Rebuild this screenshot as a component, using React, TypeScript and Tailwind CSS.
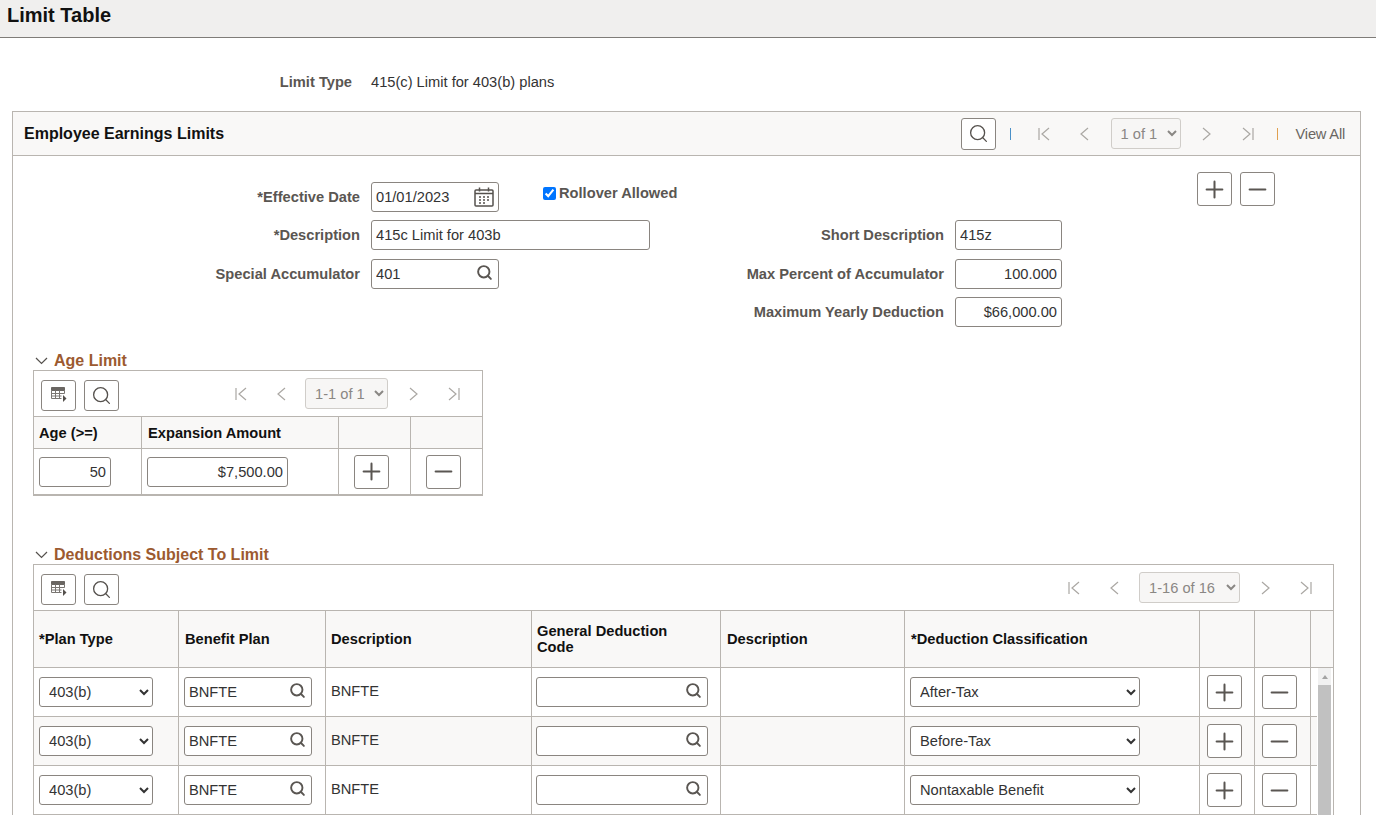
import { Minus, Plus, Search } from 'lucide-react';

const fieldBox = 'h-[30px] rounded-[3px] border border-[#8a8580] bg-white px-[4px] text-[14.67px] text-[#333] outline-none';
const labelText = 'text-right text-[14.67px] font-bold text-[#5a5652]';
const iconBtn = 'flex items-center justify-center rounded-[3px] border border-[#8a8580] bg-white';

const deductionCols = 'grid grid-cols-[145px_147px_206px_189px_184px_295px_55px_56px_22px]';
const deductionBodyCols = 'grid grid-cols-[145px_147px_206px_189px_184px_295px_55px_56px_6px]';
const ageCols = 'grid grid-cols-[108px_197px_72px_71px]';

const rows = [
  { id: 1, cls: 'After-Tax', shade: false },
  { id: 2, cls: 'Before-Tax', shade: true },
  { id: 3, cls: 'Nontaxable Benefit', shade: false },
];

const CalendarIcon = () => (
  <svg width="22" height="22" viewBox="0 0 22 22" fill="none" stroke="#55514d" strokeWidth="1.5">
    <rect x="2" y="4" width="18" height="16" rx="1" />
    <path d="M2 7.5h18M6.5 1.5v4M15.5 1.5v4" />
    <path d="M6 11h2M10 11h2M14 11h2M6 14h2M10 14h2M14 14h2M6 17h2M10 17h2" strokeWidth="1.6" />
  </svg>
);

const GridIcon = () => (
  <svg width="16" height="16" viewBox="0 0 16 16" fill="none" stroke="#7a7672" strokeWidth="1">
    <path d="M0.5 0.5h13v3h-13z" fill="#6a6662" stroke="#6a6662" />
    <path d="M0.5 3.5v8h10M4.5 3.5v8M8.5 3.5v8M0.5 6.5h13M0.5 9h10M13.5 3.5v3" />
    <path d="M12 8l3.5 3.5-3.5 3.5z" fill="#55514d" stroke="none" />
  </svg>
);

const Chevron = ({ dir, bar }: { dir: 'left' | 'right'; bar?: boolean }) => (
  <svg width={bar ? 12 : 9} height="14" viewBox={bar ? '0 0 12 14' : '0 0 9 14'} fill="none" stroke="#aaa7a3" strokeWidth="1.2">
    {bar ? (
      dir === 'left' ? (
        <path d="M1 1v12M11 1L4 7l7 6" />
      ) : (
        <path d="M11 1v12M1 1l7 6-7 6" />
      )
    ) : dir === 'left' ? (
      <path d="M8 1L1 7l7 6" />
    ) : (
      <path d="M1 1l7 6-7 6" />
    )}
  </svg>
);

const AddRemove = ({ minus }: { minus?: boolean }) => (
  <button className={`${iconBtn} h-[34px] w-[35px]`}>
    {minus ? <Minus size={27} strokeWidth={1.8} color="#5a5652" /> : <Plus size={27} strokeWidth={1.8} color="#5a5652" />}
  </button>
);

const SearchBtn = () => (
  <button className={`${iconBtn} h-[31px] w-[35px]`}>
    <Search size={21} strokeWidth={1.5} color="#55514d" />
  </button>
);

const LookupField = ({ value, className }: { value: string; className: string }) => (
  <div className={`relative ${className}`}>
    <input readOnly value={value} className={`${fieldBox} w-full`} />
    <Search size={17} strokeWidth={2.7} color="#5a5652" className="absolute right-[6px] top-[5px]" />
  </div>
);

const Pager = ({ label, width }: { label: string; width: string }) => (
  <select disabled value={label} className={`h-[31px] ${width} rounded-[3px] border border-[#d0cdc9] bg-[#f7f6f5] pl-[5px] text-[14.67px] text-[#8a8784]`}>
    <option>{label}</option>
  </select>
);

const SectionTitle = ({ children }: { children: string }) => (
  <div className="flex h-[18px] items-center gap-[6px] pl-[2px]">
    <svg width="13" height="8" viewBox="0 0 13 8" fill="none" stroke="#55514d" strokeWidth="1.2">
      <path d="M1 1l5.5 5.5L12 1" />
    </svg>
    <span className="text-[16px] font-bold text-[#9c5a30]">{children}</span>
  </div>
);

export default function App() {
  return (
    <div className="h-[815px] overflow-hidden bg-white font-['Liberation_Sans',sans-serif]">
      <div className="h-[38px] border-b border-[#7f7c78] bg-[#f0efee] pl-[7px] pt-[2px] text-[20px] font-bold leading-[26px] text-[#111]">
        Limit Table
      </div>

      <div className="mt-[35px] flex h-[18px] items-center">
        <div className="w-[352px] text-right text-[14.67px] font-bold text-[#5a5652]">Limit Type</div>
        <div className="ml-[19px] text-[14.67px] text-[#333]">415(c) Limit for 403(b) plans</div>
      </div>

      <div className="ml-[12px] mr-[15px] mt-[20px] border border-[#b9b5b0] pb-[40px]">
        <div className="flex h-[44px] items-center border-b border-[#b9b5b0] bg-[#f9f8f7] pl-[11px]">
          <span className="text-[16px] font-bold text-[#111]">Employee Earnings Limits</span>
          <div className="ml-auto flex items-center pr-[15px]">
            <button className={`${iconBtn} h-[32px] w-[35px]`}>
              <Search size={21} strokeWidth={1.5} color="#55514d" />
            </button>
            <span className="ml-[14px] h-[12px] w-px bg-[#4a90c8]" />
            <span className="ml-[27px] flex"><Chevron dir="left" bar /></span>
            <span className="ml-[30px] flex"><Chevron dir="left" /></span>
            <span className="ml-[22px] flex"><Pager label="1 of 1" width="w-[70px]" /></span>
            <span className="ml-[21px] flex"><Chevron dir="right" /></span>
            <span className="ml-[31px] flex"><Chevron dir="right" bar /></span>
            <span className="ml-[23px] h-[12px] w-px bg-[#e0a050]" />
            <span className="ml-[18px] text-[14.67px] tracking-[-0.2px] text-[#6a6662]">View All</span>
          </div>
        </div>

        <div className="flex h-[196px]">
          <div className="w-[686px] pt-[26px]">
            <div className="flex items-center">
              <div className={`w-[347px] ${labelText}`}>*Effective Date</div>
              <div className="relative ml-[11px] w-[128px]">
                <input readOnly value="01/01/2023" className={`${fieldBox} w-full`} />
                <span className="absolute right-[4px] top-[4px]"><CalendarIcon /></span>
              </div>
              <label className="mb-[8px] ml-[44px] flex items-center gap-[3px] text-[14.67px] font-bold text-[#5a5652]">
                <input type="checkbox" readOnly checked className="h-[13px] w-[13px] accent-[#0075ff]" />
                Rollover Allowed
              </label>
            </div>
            <div className="mt-[8px] flex items-center">
              <div className={`w-[347px] ${labelText}`}>*Description</div>
              <input readOnly value="415c Limit for 403b" className={`${fieldBox} ml-[11px] w-[279px]`} />
            </div>
            <div className="mt-[9px] flex items-center">
              <div className={`w-[347px] ${labelText}`}>Special Accumulator</div>
              <LookupField value="401" className="ml-[11px] w-[128px]" />
            </div>
          </div>

          <div className="w-[363px] pt-[64px]">
            <div className="flex items-center">
              <div className={`w-[245px] ${labelText}`}>Short Description</div>
              <input readOnly value="415z" className={`${fieldBox} ml-[11px] w-[107px]`} />
            </div>
            <div className="mt-[9px] flex items-center">
              <div className={`w-[245px] ${labelText}`}>Max Percent of Accumulator</div>
              <input readOnly value="100.000" className={`${fieldBox} ml-[11px] w-[107px] text-right`} />
            </div>
            <div className="mt-[8px] flex items-center">
              <div className={`w-[245px] ${labelText}`}>Maximum Yearly Deduction</div>
              <input readOnly value="$66,000.00" className={`${fieldBox} ml-[11px] w-[107px] text-right`} />
            </div>
          </div>

          <div className="ml-[135px] flex gap-[8px] pt-[16px]">
            <AddRemove />
            <AddRemove minus />
          </div>
        </div>

        <div className="ml-[20px]">
          <SectionTitle>Age Limit</SectionTitle>
          <div className="w-[450px] border border-b-2 border-[#b9b5b0]">
            <div className="flex h-[45px] items-center pl-[7px]">
              <button className={`${iconBtn} mt-[3px] h-[31px] w-[35px]`}><GridIcon /></button>
              <span className="ml-[8px] mt-[3px] flex"><SearchBtn /></span>
              <span className="ml-[116px] flex"><Chevron dir="left" bar /></span>
              <span className="ml-[30px] flex"><Chevron dir="left" /></span>
              <span className="ml-[19px] flex"><Pager label="1-1 of 1" width="w-[83px]" /></span>
              <span className="ml-[21px] flex"><Chevron dir="right" /></span>
              <span className="ml-[30px] flex"><Chevron dir="right" bar /></span>
            </div>
            <div className={`${ageCols} h-[33px] border-y border-[#b9b5b0] bg-[#f9f8f7] text-[14.67px] font-bold text-[#111]`}>
              <div className="flex items-center border-r border-[#b9b5b0] pl-[5px]">Age (&gt;=)</div>
              <div className="flex items-center border-r border-[#b9b5b0] pl-[6px]">Expansion Amount</div>
              <div className="border-r border-[#b9b5b0]" />
              <div />
            </div>
            <div className={`${ageCols} h-[45px]`}>
              <div className="flex items-center border-r border-[#b9b5b0] pl-[5px]">
                <input readOnly value="50" className={`${fieldBox} w-[72px] text-right`} />
              </div>
              <div className="flex items-center border-r border-[#b9b5b0] pl-[5px]">
                <input readOnly value="$7,500.00" className={`${fieldBox} w-[141px] text-right`} />
              </div>
              <div className="flex items-center border-r border-[#b9b5b0] pl-[15px]"><AddRemove /></div>
              <div className="flex items-center pl-[15px]"><AddRemove minus /></div>
            </div>
          </div>
        </div>

        <div className="ml-[20px] mt-[50px]">
          <SectionTitle>Deductions Subject To Limit</SectionTitle>
          <div className="w-[1301px] border border-[#b9b5b0]">
            <div className="flex h-[45px] items-center pl-[7px]">
              <button className={`${iconBtn} mt-[3px] h-[31px] w-[35px]`}><GridIcon /></button>
              <span className="ml-[8px] mt-[3px] flex"><SearchBtn /></span>
              <span className="ml-[949px] flex"><Chevron dir="left" bar /></span>
              <span className="ml-[30px] flex"><Chevron dir="left" /></span>
              <span className="ml-[20px] flex"><Pager label="1-16 of 16" width="w-[101px]" /></span>
              <span className="ml-[21px] flex"><Chevron dir="right" /></span>
              <span className="ml-[30px] flex"><Chevron dir="right" bar /></span>
            </div>
            <div className={`${deductionCols} h-[58px] border-y border-[#b9b5b0] bg-[#f9f8f7] text-[14.67px] font-bold leading-[16px] text-[#111]`}>
              <div className="flex items-center border-r border-[#b9b5b0] pl-[5px]">*Plan Type</div>
              <div className="flex items-center border-r border-[#b9b5b0] pl-[6px]">Benefit Plan</div>
              <div className="flex items-center border-r border-[#b9b5b0] pl-[5px]">Description</div>
              <div className="flex items-center border-r border-[#b9b5b0] pl-[5px]">General Deduction<br />Code</div>
              <div className="flex items-center border-r border-[#b9b5b0] pl-[6px]">Description</div>
              <div className="flex items-center border-r border-[#b9b5b0] pl-[6px]">*Deduction Classification</div>
              <div className="border-r border-[#b9b5b0]" />
              <div className="border-r border-[#b9b5b0]" />
              <div />
            </div>
            <div className="flex">
              <div>
                {rows.map((row) => (
                  <div key={row.id} className={`${deductionBodyCols} h-[49px] border-b border-[#b9b5b0] ${row.shade ? 'bg-[#f9f8f7]' : 'bg-white'}`}>
                    <div className="flex items-center border-r border-[#b9b5b0] pl-[5px]">
                      <select value="403(b)" onChange={() => {}} className={`${fieldBox} w-[114px] pl-[5px]`}>
                        <option>403(b)</option>
                      </select>
                    </div>
                    <div className="flex items-center border-r border-[#b9b5b0] pl-[5px]">
                      <LookupField value="BNFTE" className="w-[128px]" />
                    </div>
                    <div className="flex items-center border-r border-[#b9b5b0] pb-[3px] pl-[5px] text-[14.67px] text-[#333]">BNFTE</div>
                    <div className="flex items-center border-r border-[#b9b5b0] pl-[4px]">
                      <LookupField value="" className="w-[172px]" />
                    </div>
                    <div className="border-r border-[#b9b5b0]" />
                    <div className="flex items-center border-r border-[#b9b5b0] pl-[5px]">
                      <select value={row.cls} onChange={() => {}} className={`${fieldBox} w-[230px] pl-[5px]`}>
                        <option>{row.cls}</option>
                      </select>
                    </div>
                    <div className="flex items-center border-r border-[#b9b5b0] pl-[7px]"><AddRemove /></div>
                    <div className="flex items-center border-r border-[#b9b5b0] pl-[7px]"><AddRemove minus /></div>
                    <div />
                  </div>
                ))}
              </div>
              <div className="ml-[1px] w-[13px] bg-[#f1f1f1]">
                <div className="flex h-[17px] items-center justify-center">
                  <span className="border-x-[3px] border-b-[4px] border-x-transparent border-b-[#a3a3a3]" />
                </div>
                <div className="h-[130px] bg-[#c1c1c1]" />
              </div>
            </div>
          </div>
        </div>
      </div>
    </div>
  );
}
